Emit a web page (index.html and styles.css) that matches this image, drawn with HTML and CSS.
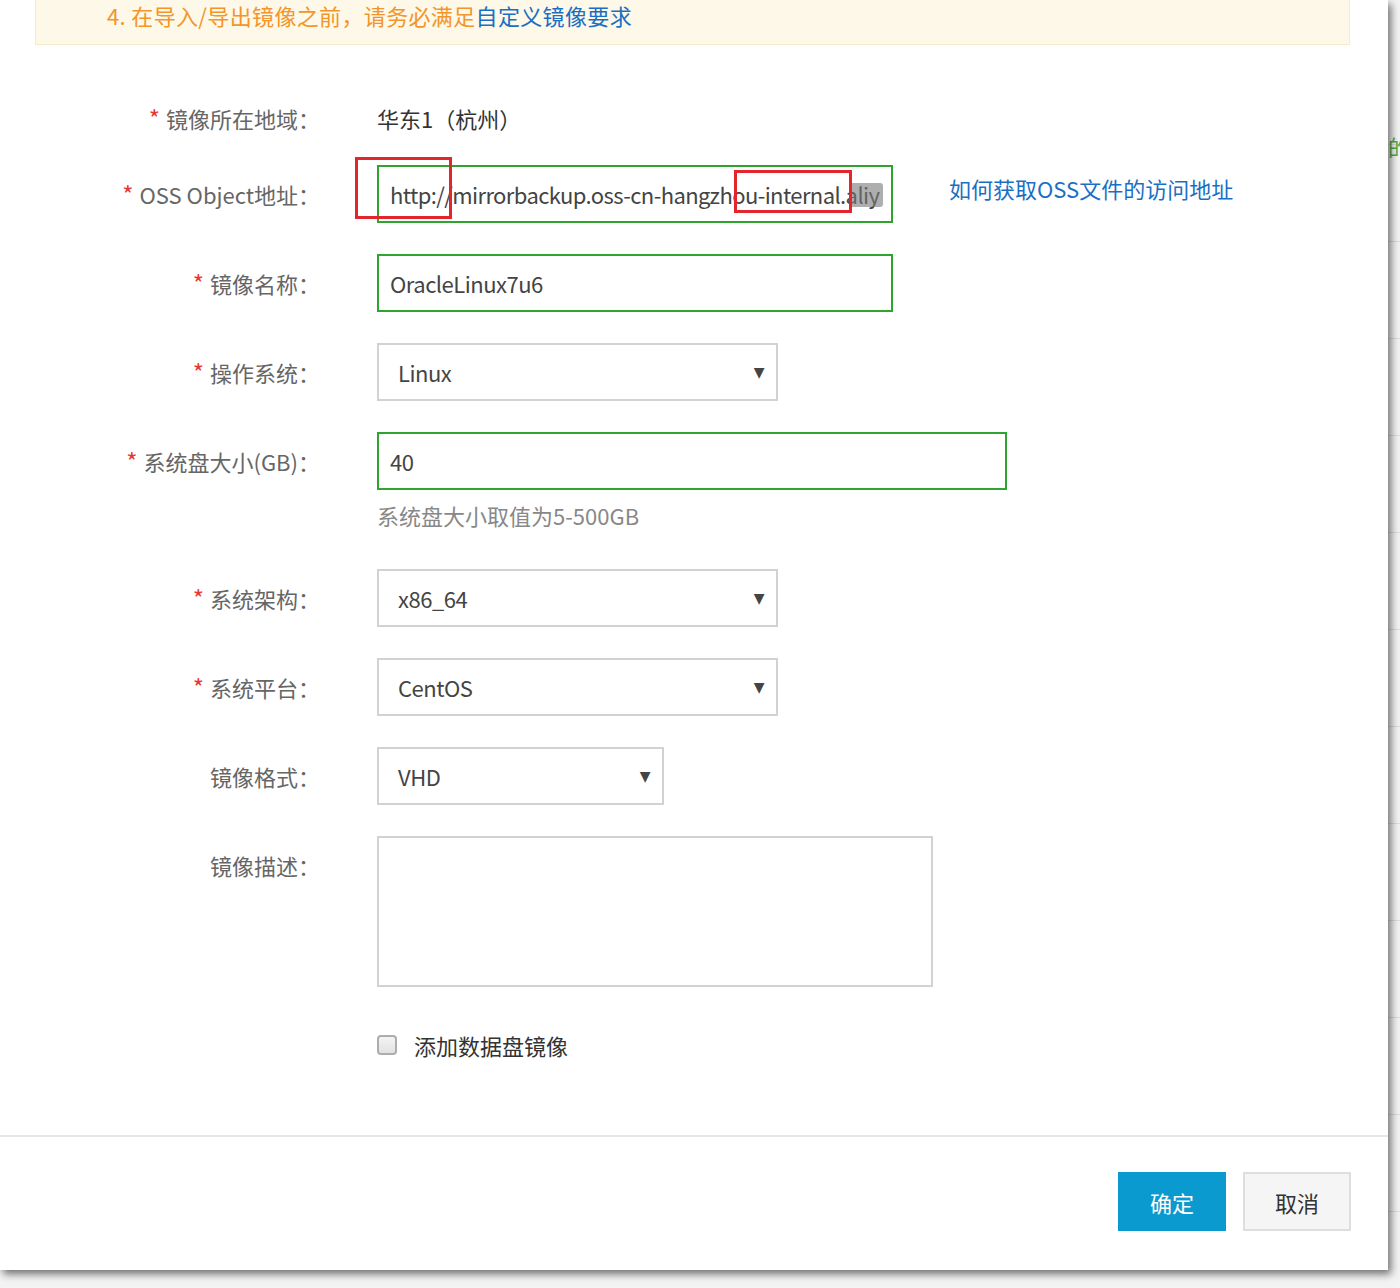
FILE: index.html
```html
<!DOCTYPE html>
<html lang="zh-CN">
<head>
<meta charset="utf-8">
<title>导入镜像</title>
<link rel="stylesheet" href="styles.css">
</head>
<body>
<div class="backdrop">
  <span class="bg-text">的</span>
</div>
<div class="modal">
  <div class="notice">4. 在导入/导出镜像之前，请务必满足<a class="link" href="#">自定义镜像要求</a></div>

  <div class="form">
    <div class="row row-first">
      <div class="lbl"><span class="req">*</span>镜像所在地域：</div>
      <div class="value">华东1（杭州）</div>
    </div>

    <div class="row">
      <div class="lbl"><span class="req">*</span>OSS Object地址：</div>
      <div class="input ok w-mid">
        <span class="input-text url">http://mirrorbackup.oss-cn-hangzhou-internal.aliy</span>
        <span class="tag-overlay"></span>
        <span class="mark mark-1"></span>
        <span class="mark mark-2"></span>
      </div>
      <a class="help-link" href="#">如何获取OSS文件的访问地址</a>
    </div>

    <div class="row">
      <div class="lbl"><span class="req">*</span>镜像名称：</div>
      <div class="input ok w-mid"><span class="input-text">OracleLinux7u6</span></div>
    </div>

    <div class="row">
      <div class="lbl"><span class="req">*</span>操作系统：</div>
      <div class="select w-sel"><span>Linux</span><span class="arrow">▼</span></div>
    </div>

    <div class="row row-hinted">
      <div class="lbl"><span class="req">*</span>系统盘大小(GB)：</div>
      <div class="ctl">
        <div class="input ok w-wide"><span class="input-text">40</span></div>
        <div class="hint">系统盘大小取值为5-500GB</div>
      </div>
    </div>

    <div class="row">
      <div class="lbl"><span class="req">*</span>系统架构：</div>
      <div class="select w-sel"><span>x86_64</span><span class="arrow">▼</span></div>
    </div>

    <div class="row">
      <div class="lbl"><span class="req">*</span>系统平台：</div>
      <div class="select w-sel"><span>CentOS</span><span class="arrow">▼</span></div>
    </div>

    <div class="row">
      <div class="lbl">镜像格式：</div>
      <div class="select w-small"><span>VHD</span><span class="arrow">▼</span></div>
    </div>

    <div class="row">
      <div class="lbl">镜像描述：</div>
      <div class="textarea"></div>
    </div>

    <div class="row row-check">
      <div class="lbl"></div>
      <label class="check"><span class="box"></span>添加数据盘镜像</label>
    </div>
  </div>

  <div class="footer">
    <button class="btn btn-primary">确定</button>
    <button class="btn btn-default">取消</button>
  </div>
</div>
</body>
</html>
```

FILE: styles.css
```css
* { box-sizing: border-box; }

html, body {
  margin: 0;
  padding: 0;
}

body {
  width: 1400px;
  height: 1288px;
  overflow: hidden;
  background: #f1f1f1;
  font-family: "Noto Sans CJK SC", "Noto Sans", sans-serif;
  font-size: 22px;
  color: #333;
  position: relative;
}

.backdrop {
  position: absolute;
  left: 0;
  top: 0;
  width: 1400px;
  height: 1288px;
  background:
    repeating-linear-gradient(to bottom, transparent 0, transparent 96px, #dddddd 96px, #dddddd 97px) 0 48px / 100% 100% no-repeat,
    #f3f3f3;
}

.bg-text {
  position: absolute;
  left: 1388px;
  top: 130px;
  color: #4caf50;
  font-size: 22px;
}

.modal {
  position: relative;
  width: 1388px;
  height: 1270px;
  background: #fff;
  box-shadow: 3px 4px 8px rgba(0, 0, 0, 0.55);
  display: flex;
  flex-direction: column;
}

.notice {
  margin: 0 38px 0 35px;
  height: 45px;
  background: #fdf8e7;
  border: 1px solid #f6eccd;
  border-top: none;
  padding-left: 71px;
  line-height: 30px;
  color: #f3952a;
  font-size: 22px;
  letter-spacing: 0.35px;
}

.link {
  color: #1a6fc4;
  text-decoration: none;
}

.form {
  padding-top: 46px;
  flex: 1;
}

.row {
  display: flex;
  align-items: flex-start;
  margin-bottom: 31px;
}

.row-first { margin-bottom: 16px; }
.row-hinted { margin-bottom: 38px; }

.lbl {
  width: 320px;
  margin-right: 57px;
  text-align: right;
  line-height: 58px;
  height: 58px;
  color: #666;
  white-space: nowrap;
}

.row-first .lbl,
.row-first .value {
  line-height: 54px;
}

.req {
  color: #e8372f;
  margin-right: 6px;
  font-size: 24px;
}

.value {
  line-height: 58px;
  color: #333;
}

.input {
  position: relative;
  height: 58px;
  border: 2px solid #2fa52f;
  padding: 0 11px;
  line-height: 54px;
  color: #444;
  white-space: nowrap;
}

.input-text {
  display: block;
  overflow: hidden;
  letter-spacing: -0.5px;
}

.input-text.url {
  letter-spacing: -0.6px;
}

.w-mid { width: 516px; }
.w-wide { width: 630px; }

.tag-overlay {
  position: absolute;
  left: 471px;
  top: 16px;
  width: 33px;
  height: 24px;
  background: rgba(120, 120, 120, 0.6);
  border-radius: 3px;
}

.mark {
  position: absolute;
  border: 3px solid #e3262c;
}

.mark-1 {
  left: -24px;
  top: -10px;
  width: 97px;
  height: 62px;
}

.mark-2 {
  left: 355px;
  top: 3px;
  width: 118px;
  height: 43px;
}

.help-link {
  margin-left: 56px;
  line-height: 46px;
  color: #1a6fc4;
  text-decoration: none;
}

.ctl {
  display: flex;
  flex-direction: column;
}

.hint {
  margin-top: 9px;
  line-height: 32px;
  color: #888;
}

.select {
  height: 58px;
  border: 2px solid #d2d2d2;
  padding: 0 12px 0 19px;
  display: flex;
  align-items: center;
  justify-content: space-between;
  color: #444;
  letter-spacing: -0.5px;
}

.w-sel { width: 401px; }
.w-small { width: 287px; }

.arrow {
  font-size: 14px;
  color: #444;
  font-family: "DejaVu Sans", sans-serif;
}

.textarea {
  width: 556px;
  height: 151px;
  border: 2px solid #d2d2d2;
}

.row-check {
  padding-top: 12px;
  align-items: center;
}

.row-check .lbl {
  height: 30px;
  line-height: 30px;
}

.check {
  display: flex;
  align-items: center;
  color: #333;
  line-height: 30px;
}

.box {
  display: inline-block;
  width: 20px;
  height: 20px;
  border: 2px solid #adadad;
  border-radius: 4px;
  background: linear-gradient(#f4f4f4, #e2e2e2);
  margin-right: 17px;
}

.footer {
  height: 135px;
  border-top: 2px solid #e6e6e6;
  display: flex;
  justify-content: flex-end;
  align-items: flex-start;
  padding: 35px 37px 0 0;
  gap: 17px;
}

.btn {
  height: 59px;
  width: 108px;
  font-family: "Noto Sans CJK SC", "Noto Sans", sans-serif;
  font-size: 22px;
  cursor: pointer;
}

.btn-primary {
  background: #0a9ad0;
  color: #fff;
  border: none;
}

.btn-default {
  background: #f5f5f5;
  color: #333;
  border: 2px solid #dedede;
}
```
